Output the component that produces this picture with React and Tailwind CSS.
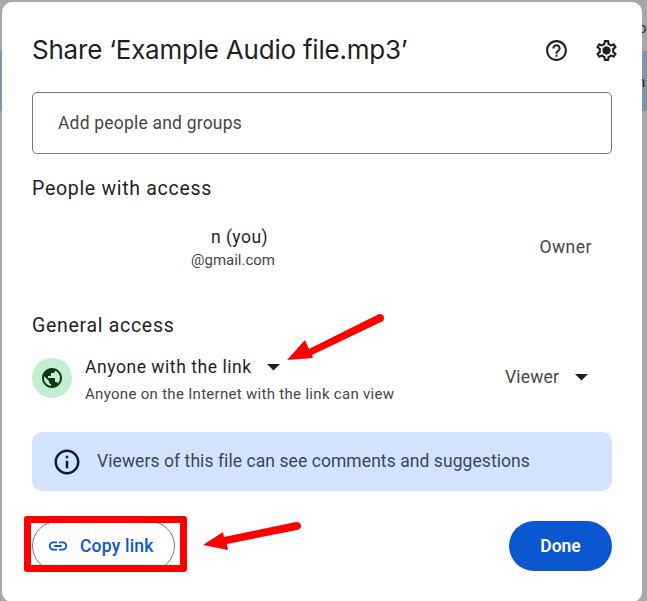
function Caret({ className }) {
    return (
        <svg width="13" height="7" viewBox="0 0 13 7" className={className}>
            <path d="M0 0h13L6.5 6.5z" fill="#1f1f1f" />
        </svg>
    );
}

function HelpIcon() {
    return (
        <svg width="25" height="25" viewBox="0 0 24 24" fill="#1f1f1f">
            <path d="M11 18h2v-2h-2v2zm1-16C6.48 2 2 6.48 2 12s4.48 10 10 10 10-4.48 10-10S17.52 2 12 2zm0 18c-4.41 0-8-3.59-8-8s3.59-8 8-8 8 3.59 8 8-3.59 8-8 8zm0-14c-2.21 0-4 1.79-4 4h2c0-1.1.9-2 2-2s2 .9 2 2c0 2-3 1.75-3 5h2c0-2.25 3-2.5 3-5 0-2.21-1.79-4-4-4z" />
        </svg>
    );
}

function GearIcon() {
    return (
        <svg width="25" height="25" viewBox="0 0 24 24" fill="#1f1f1f">
            <path d="M19.43 12.98c.04-.32.07-.64.07-.98s-.03-.66-.07-.98l2.11-1.65c.19-.15.24-.42.12-.64l-2-3.46c-.12-.22-.39-.3-.61-.22l-2.49 1c-.52-.4-1.08-.73-1.69-.98l-.38-2.65C14.46 2.18 14.25 2 14 2h-4c-.25 0-.46.18-.49.42l-.38 2.65c-.61.25-1.17.59-1.69.98l-2.49-1c-.23-.09-.49 0-.61.22l-2 3.46c-.13.22-.07.49.12.64l2.11 1.65c-.04.32-.07.65-.07.98s.03.66.07.98l-2.11 1.65c-.19.15-.24.42-.12.64l2 3.46c.12.22.39.3.61.22l2.49-1c.52.4 1.08.73 1.69.98l.38 2.65c.03.24.24.42.49.42h4c.25 0 .46-.18.49-.42l.38-2.65c.61-.25 1.17-.59 1.69-.98l2.49 1c.23.09.49 0 .61-.22l2-3.46c.12-.22.07-.49-.12-.64l-2.11-1.65zM17.45 11.27c.04.31.05.52.05.73 0 .21-.02.43-.05.73l-.14 1.13.89.7 1.08.84-.7 1.21-1.27-.51-1.04-.42-.9.68c-.43.32-.84.56-1.25.73l-1.06.43-.16 1.13-.2 1.35h-1.4l-.19-1.35-.16-1.13-1.06-.43c-.43-.18-.83-.41-1.23-.71l-.91-.7-1.06.43-1.27.51-.7-1.21 1.08-.84.89-.7-.14-1.13c-.03-.31-.05-.54-.05-.74s.02-.43.05-.73l.14-1.13-.89-.7-1.08-.84.7-1.21 1.27.51 1.04.42.9-.68c.43-.32.84-.56 1.25-.73l1.06-.43.16-1.13.2-1.35h1.39l.19 1.35.16 1.13 1.06.43c.43.18.83.41 1.23.71l.91.7 1.06-.43 1.27-.51.7 1.21-1.07.85-.89.7.14 1.13zM12 8c-2.21 0-4 1.79-4 4s1.79 4 4 4 4-1.79 4-4-1.79-4-4-4z" />
        </svg>
    );
}

function GlobeIcon() {
    return (
        <svg width="24" height="24" viewBox="0 0 24 24" fill="#0a3818">
            <path d="M12 2C6.48 2 2 6.48 2 12s4.48 10 10 10 10-4.48 10-10S17.52 2 12 2zM4 12c0-.61.08-1.21.21-1.78L8.99 15v1c0 1.1.9 2 2 2v1.93C7.06 19.43 4 16.07 4 12zm13.89 5.4c-.26-.81-1-1.4-1.9-1.4h-1v-3c0-.55-.45-1-1-1h-6v-2h2c.55 0 1-.45 1-1V7h2c1.1 0 2-.9 2-2v-.41C17.92 5.77 20 8.65 20 12c0 2.08-.81 3.98-2.11 5.4z" />
        </svg>
    );
}

function InfoIcon() {
    return (
        <svg width="30" height="30" viewBox="0 0 24 24" fill="#041e49">
            <path d="M11 7h2v2h-2zm0 4h2v6h-2zm1-9C6.48 2 2 6.48 2 12s4.48 10 10 10 10-4.48 10-10S17.52 2 12 2zm0 18c-4.41 0-8-3.59-8-8s3.59-8 8-8 8 3.59 8 8-3.59 8-8 8z" />
        </svg>
    );
}

function LinkIcon() {
    return (
        <svg width="22" height="22" viewBox="0 0 24 24" fill="#0b57d0">
            <path d="M3.9 12c0-1.71 1.39-3.1 3.1-3.1h4V7H7c-2.76 0-5 2.24-5 5s2.24 5 5 5h4v-1.9H7c-1.71 0-3.1-1.39-3.1-3.1zM8 13h8v-2H8v2zm9-6h-4v1.9h4c1.71 0 3.1 1.39 3.1 3.1s-1.39 3.1-3.1 3.1h-4V17h4c2.76 0 5-2.24 5-5s-2.24-5-5-5z" />
        </svg>
    );
}

// hand drawn annotation arrow
function RedArrow({ className, width, height, d }) {
    return (
        <svg width={width} height={height} className={className} viewBox={`0 0 ${width} ${height}`}>
            <path d={d} fill="#fe0000" />
        </svg>
    );
}

export default function App() {
    return (
        <div className="relative w-[647px] h-[601px] overflow-hidden bg-[#a8a8a8] font-['Roboto',sans-serif]">
            {/* Page behind the dialog */}
            <div className="absolute left-0 top-[51px] w-[3px] h-[60px] bg-[#7d96a8]" />
            <div className="absolute right-0 top-[51px] w-[6px] h-[60px] bg-[#7d96a8]" />
            <span className="absolute left-[638px] top-[19px] text-[15px] leading-[18px] text-[#3a3020]">o</span>
            <span className="absolute left-[637px] top-[73px] text-[15px] leading-[18px] text-[#1f2a3a]">n</span>

            {/* Dialog */}
            <div className="absolute left-[2px] top-[2px] w-[640px] h-[600px] bg-white rounded-[10px] px-[30px] pt-[33px]">
                <div className="flex items-center justify-between h-[30px]">
                    <h1 className="text-[26px] leading-[30px] text-[#1f1f1f] font-['Inter',sans-serif] tracking-[-0.22px]">Share ‘Example Audio file.mp3’</h1>
                    <div className="flex items-center gap-[25px] -mr-[7px]">
                        <HelpIcon />
                        <GearIcon />
                    </div>
                </div>

                <div className="mt-[27px] h-[62px] border border-[#747775] rounded-[5px] flex items-center pl-[25px] text-[17.5px] tracking-[0.2px] text-[#444746]">
                    Add people and groups
                </div>

                <h2 className="mt-[23px] text-[19.5px] leading-[24px] tracking-[0.7px] text-[#1f1f1f]">People with access</h2>

                <div className="mt-[24px] flex items-start justify-between">
                    <div className="pl-[159px] flex flex-col">
                        <span className="pl-[20px] text-[17.5px] leading-[24px] tracking-[0.45px] text-[#1f1f1f]">n (you)</span>
                        <span className="mt-[1px] text-[15px] leading-[20px] text-[#444746]">@gmail.com</span>
                    </div>
                    <span className="mt-[10px] pr-[20px] text-[17.5px] leading-[24px] tracking-[0.5px] text-[#444746]">Owner</span>
                </div>

                <h2 className="mt-[44px] text-[19.5px] leading-[24px] tracking-[0.7px] text-[#1f1f1f]">General access</h2>

                <div className="mt-[17px] flex items-start justify-between">
                    <div className="flex items-start">
                        <div className="mt-[3px] w-[40px] h-[40px] rounded-full bg-[#c4eed0] flex items-center justify-center">
                            <GlobeIcon />
                        </div>
                        <div className="ml-[13px]">
                            <div className="flex items-center h-[24px]">
                                <span className="text-[17.5px] leading-[24px] text-[#1f1f1f] tracking-[0.55px]">Anyone with the link</span>
                                <Caret className="ml-[15px]" />
                            </div>
                            <div className="mt-[5px] text-[15px] leading-[20px] text-[#444746] tracking-[0.3px]">Anyone on the Internet with the link can view</div>
                        </div>
                    </div>
                    <div className="flex items-center mt-[10px] pr-[24px]">
                        <span className="text-[17.5px] leading-[24px] tracking-[0.15px] text-[#444746]">Viewer</span>
                        <Caret className="ml-[16px]" />
                    </div>
                </div>

                <div className="mt-[28px] h-[59px] rounded-[10px] bg-[#d3e3fd] flex items-center pl-[20px] text-[17.5px] tracking-[0.07px] text-[#3b4559]">
                    <InfoIcon />
                    <span className="ml-[15px]">Viewers of this file can see comments and suggestions</span>
                </div>

                <div className="mt-[30px] flex items-center justify-between">
                    <div className="h-[50px] w-[143px] rounded-full border border-[#747775] flex items-center pl-[14px]">
                        <LinkIcon />
                        <span className="ml-[11px] text-[17.5px] tracking-[0.2px] text-[#0b57d0] font-medium">Copy link</span>
                    </div>
                    <div className="h-[50px] w-[103px] rounded-full bg-[#0b57d0] flex items-center justify-center text-[17.5px] font-semibold text-white">Done</div>
                </div>
            </div>

            {/* Annotations */}
            <div className="absolute left-[24px] top-[516px] w-[163px] h-[56px] border-[7px] border-[#fe0000] rounded-[3px]" />
            <RedArrow className="absolute left-[280px] top-[310px]" width={110} height={55} d="M7 50L25 30L29 39L99 4Q104 4 104 8Q104 11 101 12L32 45L33 48Z" />
            <RedArrow className="absolute left-[200px] top-[518px]" width={105} height={36} d="M3 27L23 14L24 19L96 4Q101 4 101 8Q101 11 97 12L27 26L28 32Z" />
        </div>
    );
}
